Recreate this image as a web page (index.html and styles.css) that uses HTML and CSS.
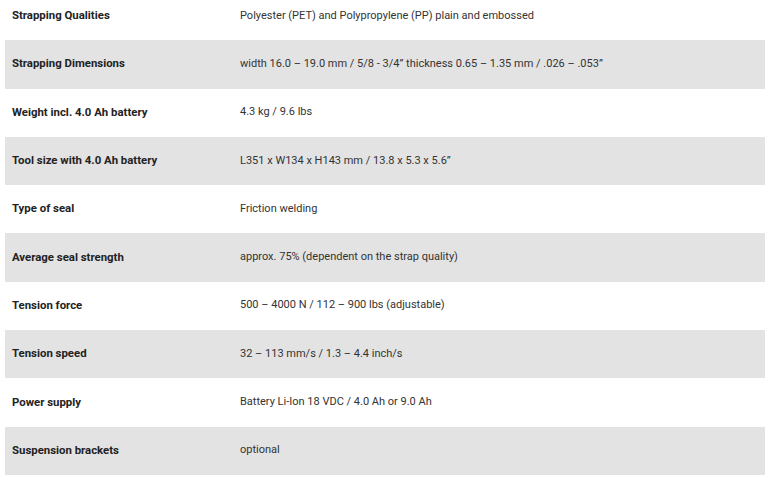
FILE: index.html
```html
<!DOCTYPE html>
<html lang="en">
<head>
<meta charset="utf-8">
<title>Specifications</title>
<link rel="stylesheet" href="styles.css">
</head>
<body>
<table class="specs">
  <tbody>
    <tr><th>Strapping Qualities</th><td>Polyester (PET) and Polypropylene (PP) plain and embossed</td></tr>
    <tr><th>Strapping Dimensions</th><td>width 16.0 – 19.0 mm / 5/8 - 3/4” thickness 0.65 – 1.35 mm / .026 – .053”</td></tr>
    <tr><th>Weight incl. 4.0 Ah battery</th><td>4.3 kg / 9.6 lbs</td></tr>
    <tr><th>Tool size with 4.0 Ah battery</th><td>L351 x W134 x H143 mm / 13.8 x 5.3 x 5.6”</td></tr>
    <tr><th>Type of seal</th><td>Friction welding</td></tr>
    <tr><th>Average seal strength</th><td>approx. 75% (dependent on the strap quality)</td></tr>
    <tr><th>Tension force</th><td>500 – 4000 N / 112 – 900 lbs (adjustable)</td></tr>
    <tr><th>Tension speed</th><td>32 – 113 mm/s / 1.3 – 4.4 inch/s</td></tr>
    <tr><th>Power supply</th><td>Battery Li-Ion 18 VDC / 4.0 Ah or 9.0 Ah</td></tr>
    <tr><th>Suspension brackets</th><td>optional</td></tr>
  </tbody>
</table>
</body>
</html>
```
FILE: styles.css
```css
html, body {
  margin: 0;
  padding: 0;
  background: #ffffff;
}
body {
  font-family: Roboto, "Liberation Sans", Arial, sans-serif;
  color: #2a2a2a;
}
.specs {
  margin: -8px 0 0 5px;
  width: 760px;
  border-collapse: collapse;
  table-layout: fixed;
}
.specs tr {
  height: 48.3px;
}
.specs tr:nth-child(even) {
  background: #e3e3e3;
}
.specs th {
  width: 221px;
  padding: 0 0 2px 7px;
  text-align: left;
  vertical-align: middle;
  font-weight: 700;
  font-size: 11.4px;
  color: #222222;
}
.specs td {
  padding: 0 0 2px 7px;
  vertical-align: middle;
  font-size: 11px;
  color: #333333;
}
```
